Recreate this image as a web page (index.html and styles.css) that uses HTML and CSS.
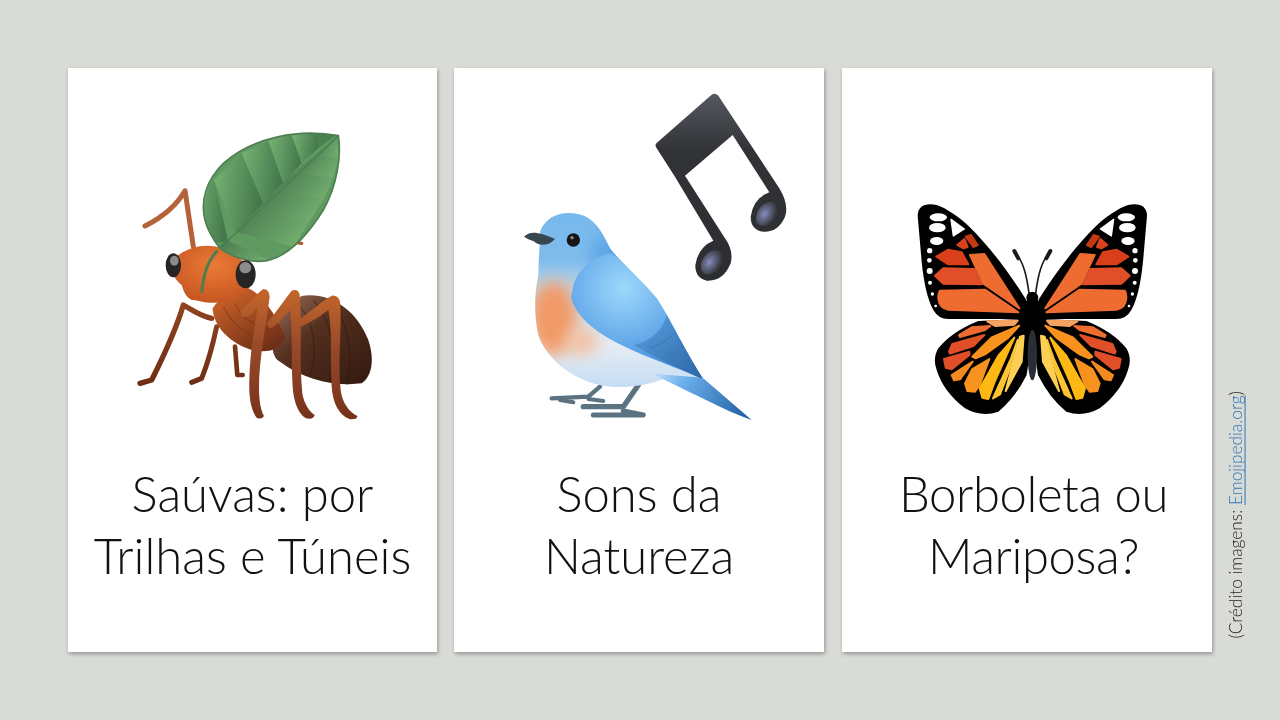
FILE: index.html
```html
<!DOCTYPE html>
<html lang="pt-BR">
<head>
<meta charset="utf-8">
<title>Cartões</title>
<link rel="stylesheet" href="styles.css">
</head>
<body>
<main class="stage">
  <section class="card card-first">
    <div class="figure">
      <svg class="art art-ant" viewBox="0 0 810 930" aria-hidden="true">
        <defs>
          <linearGradient id="antLeg" gradientUnits="userSpaceOnUse" x1="0" y1="510" x2="0" y2="900"><stop offset="0" stop-color="#c4662a"/><stop offset=".45" stop-color="#97492a"/><stop offset="1" stop-color="#76321a"/></linearGradient>
          <linearGradient id="antFar" gradientUnits="userSpaceOnUse" x1="0" y1="550" x2="0" y2="790"><stop offset="0" stop-color="#8f4320"/><stop offset="1" stop-color="#6e2e14"/></linearGradient>
          <radialGradient id="antHead" cx=".55" cy=".35" r=".75"><stop offset="0" stop-color="#ec7a36"/><stop offset="1" stop-color="#c0501f"/></radialGradient>
          <linearGradient id="antThorax" x1="0" y1="0" x2=".7" y2="1"><stop offset="0" stop-color="#d9692a"/><stop offset="1" stop-color="#6f2f18"/></linearGradient>
          <linearGradient id="antBelly" x1="0" y1="0" x2="1" y2="1"><stop offset="0" stop-color="#a07260"/><stop offset=".4" stop-color="#54301f"/><stop offset="1" stop-color="#321810"/></linearGradient>
          <linearGradient id="leafA" x1="0" y1="0" x2="1" y2=".2"><stop offset="0" stop-color="#79b474"/><stop offset="1" stop-color="#44784c"/></linearGradient>
          <linearGradient id="leafB" x1="0" y1=".1" x2="1" y2=".6"><stop offset="0" stop-color="#48794f"/><stop offset="1" stop-color="#72ad6e"/></linearGradient>
          <clipPath id="leafClip"><path d="M655 47C540 25 400 50 310 130C260 180 240 240 255 300C265 340 285 365 300 385C340 415 400 430 440 422C500 410 560 350 610 270C650 200 665 110 655 47Z"/></clipPath>
        </defs>
        <g fill="none" stroke-linecap="round" stroke-linejoin="round">
          <path d="M345 680L352 765L368 765" stroke="url(#antFar)" stroke-width="14"/>
          <path d="M290 620C275 690 255 750 245 775L215 787" stroke="url(#antFar)" stroke-width="15"/>
          <path d="M275 595C245 590 215 570 190 555C165 640 120 730 95 780L60 790" stroke="url(#antFar)" stroke-width="16"/>
        </g>
        <path d="M545 528C630 515 710 570 745 660C765 720 755 770 725 790C650 800 550 780 480 725C430 700 470 570 545 528Z" fill="url(#antBelly)"/>
        <g fill="none" stroke="#2d150d" stroke-opacity=".4" stroke-width="4"><path d="M580 540C640 610 650 700 630 785"/><path d="M630 540C690 610 700 710 680 795"/><path d="M540 560C590 620 590 700 570 770"/></g>
        <path d="M385 505C430 525 470 590 495 650C490 690 440 700 395 690C330 670 280 620 278 565C300 530 345 510 385 505Z" fill="url(#antThorax)"/>
        <g fill="none" stroke="#7e3514" stroke-opacity=".5" stroke-width="4"><path d="M310 560C330 600 360 640 420 650"/><path d="M345 550C360 590 400 620 460 630"/></g>
        <path d="M150 430C185 385 250 365 310 385C370 410 400 450 390 500C370 525 320 550 270 548C245 548 235 540 215 540C195 530 190 510 185 495C165 480 150 455 150 430Z" fill="url(#antHead)"/>
        <path d="M290 395C265 420 250 465 245 515" fill="none" stroke="#4f7e4d" stroke-width="9" stroke-linecap="round"/>
        <path d="M220 380L195 212C165 265 120 295 75 318" fill="none" stroke="#b5623a" stroke-width="15" stroke-linecap="round" stroke-linejoin="round"/>
        <path d="M530 368L545 370" stroke="#b4552a" stroke-width="10" stroke-linecap="round"/>
        <g clip-path="url(#leafClip)">
          <rect x="240" y="20" width="430" height="420" fill="#5f9a60"/>
          <path d="M325 365L282 180L220 260L260 370Z" fill="url(#leafA)"/>
          <path d="M345 340L430 250L365 100L282 180Z" fill="url(#leafA)"/>
          <path d="M430 250L490 190L445 62L365 100Z" fill="url(#leafA)"/>
          <path d="M490 190L545 130L515 45L445 62Z" fill="url(#leafA)"/>
          <path d="M545 130L595 85L595 40L515 45Z" fill="url(#leafA)"/>
          <path d="M595 85L655 40L595 35Z" fill="#4b8050"/>
          <path d="M320 360L470 430L300 430L290 385Z" fill="url(#leafB)"/>
          <path d="M345 335L415 265L565 310L520 380Z" fill="url(#leafB)"/>
          <path d="M415 265L475 200L610 240L565 310Z" fill="url(#leafB)"/>
          <path d="M475 200L525 155L640 175L610 240Z" fill="url(#leafB)"/>
          <path d="M525 155L585 105L655 115L640 175Z" fill="url(#leafB)"/>
          <path d="M585 105L650 50L660 115Z" fill="url(#leafB)"/>
          <path d="M300 385L655 47" stroke="#4a7d50" stroke-width="4" fill="none"/>
        </g>
        <path d="M655 47C540 25 400 50 310 130C260 180 240 240 255 300C265 340 285 365 300 385C340 415 400 430 440 422C500 410 560 350 610 270C650 200 665 110 655 47Z" fill="none" stroke="#4d7f52" stroke-width="5"/>
        <ellipse cx="160" cy="436" rx="23" ry="36" fill="#262424"/>
        <ellipse cx="163" cy="422" rx="13" ry="15" fill="#8c8a8a"/>
        <ellipse cx="377" cy="463" rx="30" ry="42" fill="#262424"/>
        <ellipse cx="376" cy="443" rx="18" ry="17" fill="#8c8a8a"/>
        <path d="M360 570C385 555 410 520 430 507Q448 508 449 530C437 620 417 720 417 800C417 840 422 870 432 888Q425 900 410 893C393 870 386 830 388 780C390 700 403 620 413 560C400 580 385 595 365 590Z" fill="url(#antLeg)"/>
        <path d="M440 610C470 575 500 530 515 512Q535 505 539 525C547 620 537 720 547 820C552 850 567 875 584 885Q580 900 558 895C533 880 520 840 518 800C513 720 518 640 510 570C490 590 470 620 450 625Z" fill="url(#antLeg)"/>
        <path d="M530 605C570 575 610 540 635 527Q655 525 660 545C667 620 652 720 662 810C667 850 687 875 712 888Q712 900 688 897C658 885 638 850 635 800C630 720 638 640 625 570C600 590 560 615 535 622Z" fill="url(#antLeg)"/>
      </svg>
    </div>
    <h2 class="title">Saúvas: por<br>Trilhas e Túneis</h2>
  </section>

  <section class="card">
    <div class="figure">
      <svg class="art art-bird" viewBox="0 0 870 1035" aria-hidden="true">
        <defs>
          <linearGradient id="noteFill" x1="0" y1="0" x2="0" y2="1"><stop offset="0" stop-color="#55585f"/><stop offset=".3" stop-color="#313337"/><stop offset="1" stop-color="#2c2d30"/></linearGradient>
          <radialGradient id="noteShine" cx=".4" cy=".55" r=".55"><stop offset="0" stop-color="#858bbd"/><stop offset="1" stop-color="#38393e"/></radialGradient>
          <linearGradient id="birdBody" gradientUnits="userSpaceOnUse" x1="0" y1="380" x2="0" y2="910"><stop offset="0" stop-color="#76b9ee"/><stop offset=".28" stop-color="#80bcec"/><stop offset=".42" stop-color="#bcd6ea"/><stop offset=".75" stop-color="#e6edf5"/><stop offset="1" stop-color="#c4dcf2"/></linearGradient>
          <radialGradient id="birdWing" gradientUnits="userSpaceOnUse" cx="340" cy="610" r="230"><stop offset="0" stop-color="#9ed8fc"/><stop offset="1" stop-color="#4d96e2"/></radialGradient>
          <linearGradient id="birdTail" gradientUnits="userSpaceOnUse" x1="420" y1="860" x2="725" y2="1005"><stop offset="0" stop-color="#cfe3f5"/><stop offset=".3" stop-color="#6db0ee"/><stop offset="1" stop-color="#1d5a9c"/></linearGradient>
          <linearGradient id="birdFeather" x1="0" y1="0" x2="1" y2="1"><stop offset="0" stop-color="#5a9fe0"/><stop offset="1" stop-color="#245e9c"/></linearGradient>
          <filter id="soft" x="-60%" y="-60%" width="220%" height="220%"><feGaussianBlur stdDeviation="24"/></filter>
          <clipPath id="birdClip"><path d="M90 440C110 385 170 375 215 390C260 405 280 450 300 490C330 530 400 590 440 640C480 700 510 770 578 880L470 878C420 900 350 910 300 905C170 890 100 800 85 750C70 680 75 620 85 570C85 520 90 490 90 440Z"/></clipPath>
        </defs>
        <path d="M604 30Q615 22 625 32L808 310Q838 360 825 395Q805 442 760 440Q722 435 722 395Q730 340 778 322L668 150L525 272L642 455Q672 495 662 535Q640 590 590 587Q555 578 556 540Q565 485 610 467L493 272L440 190Q433 180 440 174Z" fill="url(#noteFill)"/>
        <ellipse cx="605" cy="532" rx="28" ry="40" transform="rotate(35 605 532)" fill="url(#noteShine)"/>
        <ellipse cx="770" cy="387" rx="28" ry="40" transform="rotate(35 770 387)" fill="url(#noteShine)"/>
        <g fill="none" stroke="#5a7282" stroke-linecap="round" stroke-linejoin="round">
          <path d="M270 905L235 935L125 940" stroke-width="13"/>
          <path d="M235 942L280 948M150 945L190 952" stroke-width="12"/>
          <path d="M385 900L340 965L220 965" stroke-width="16"/>
          <path d="M340 978L400 990L250 990" stroke-width="15"/>
        </g>
        <g clip-path="url(#birdClip)">
          <rect x="60" y="370" width="540" height="550" fill="url(#birdBody)"/>
          <ellipse cx="130" cy="700" rx="72" ry="112" fill="#f29a66" filter="url(#soft)"/>
          <ellipse cx="215" cy="770" rx="50" ry="40" fill="#f2c0a0" filter="url(#soft)"/>
        </g>
        <path d="M430 866L578 878L725 1005C640 975 550 925 470 888Z" fill="url(#birdTail)"/>
        <g clip-path="url(#birdClip)">
          <ellipse cx="320" cy="500" rx="80" ry="60" fill="#5fa6e8" filter="url(#soft)"/>
          <path d="M183 640L190 600C205 555 240 520 300 505L620 700L620 900L578 880C450 830 340 790 280 750C230 720 195 680 183 640Z" fill="url(#birdWing)"/>
          <path d="M372 780C420 770 460 735 470 690L620 800L620 900C500 850 430 815 372 780Z" fill="url(#birdFeather)"/>
          <g fill="none" stroke="#2f6aae" stroke-opacity=".5" stroke-width="3"><path d="M420 790C470 770 490 750 500 735"/><path d="M470 815C510 795 525 780 530 770"/><path d="M515 840C540 825 548 815 552 805"/></g>
        </g>
        <path d="M42 455C60 437 85 440 135 462C115 485 85 483 70 468C60 464 50 461 42 455Z" fill="#37474f"/>
        <circle cx="190" cy="465" r="20" fill="#16161a"/>
        <circle cx="186" cy="458" r="5" fill="#8f8f96"/>
      </svg>
    </div>
    <h2 class="title">Sons da<br>Natureza</h2>
  </section>

  <section class="card card-last">
    <div class="figure">
      <svg class="art art-fly" viewBox="0 0 765 675" aria-hidden="true">
        <defs>
          <g id="flyWing">
            <path d="M362 312C310 230 250 150 190 92C160 65 125 40 95 30Q40 20 38 62L50 200Q60 300 85 345Q100 372 130 372L345 372L220 378Q140 410 100 460Q82 490 95 525Q115 590 180 640Q230 668 280 650Q330 610 365 540L385 400Z" fill="#000"/>
            <g stroke-width="6" stroke-linejoin="round">
              <path d="M105 287L240 284L340 352L130 344Q102 338 100 310Q100 294 105 287Z" fill="#ee6c30" stroke="#ee6c30"/>
              <path d="M90 242L115 220L208 222L230 268L115 266Z" fill="#e04f28" stroke="#e04f28"/>
              <path d="M94 185L130 164L170 172L190 208L130 208Z" fill="#da3f1a" stroke="#da3f1a"/>
              <path d="M195 180L238 177L343 340L235 266Z" fill="#ee6c30" stroke="#ee6c30"/>
              <path d="M157 150L178 132L188 156L175 160Z" fill="#d9431c" stroke="#d9431c"/>
              <path d="M182 125L198 120L218 150L205 156Z" fill="#c33a13" stroke="#c33a13"/>
              <path d="M247 379L338 377L328 389L270 393Z" fill="#f4a460" stroke="#f4a460"/>
              <path d="M162 420L200 397L256 393L240 405L165 426Z" fill="#ee6c30" stroke="#ee6c30"/>
              <path d="M132 470L142 447L238 420L205 453L135 476Z" fill="#e04f28" stroke="#e04f28"/>
              <path d="M117 492L193 470L193 480L140 523L122 518Z" fill="#e04f28" stroke="#e04f28"/>
              <path d="M140 540L203 500L165 553L147 556Z" fill="#f28a20" stroke="#f28a20"/>
              <path d="M180 565L202 522L253 492L225 568L210 590L187 588Z" fill="#f8921e" stroke="#f8921e"/>
              <path d="M202 485L260 427L343 392L310 428L240 478L212 490Z" fill="#f8921e" stroke="#f8921e"/>
              <path d="M224 580L242 550L280 482L328 428L270 558L250 612L232 608Z" fill="#fdb813" stroke="#fdb813"/>
              <path d="M264 610L318 490L338 435L315 520L285 598Z" fill="#fdc431" stroke="#fdc431"/>
              <path d="M302 588L345 425L356 422L350 500Z" fill="#fdd055" stroke="#fdd055"/>
            </g>
            <g fill="#fff">
              <ellipse cx="100" cy="67" rx="26" ry="12"/>
              <ellipse cx="97" cy="98" rx="25" ry="14"/>
              <ellipse cx="95" cy="138" rx="20" ry="12"/>
              <path d="M138 73L178 102L145 123Z" stroke="#fff" stroke-width="4" stroke-linejoin="round"/>
              <circle cx="74" cy="167" r="8"/><circle cx="73" cy="196" r="7"/><circle cx="74" cy="228" r="9"/><circle cx="75" cy="263" r="6"/><circle cx="82" cy="297" r="5"/><circle cx="92" cy="333" r="4"/>
            </g>
            <path d="M372 295C365 240 355 200 335 180" fill="none" stroke="#1a1a1a" stroke-width="5"/>
            <path d="M340 190L328 168" stroke="#1a1a1a" stroke-width="12" stroke-linecap="round"/>
          </g>
        </defs>
        <use href="#flyWing"/>
        <use href="#flyWing" transform="translate(764 0) scale(-1 1)"/>
        <circle cx="382" cy="308" r="18" fill="#000"/>
        <ellipse cx="382" cy="365" rx="36" ry="55" fill="#000"/>
        <ellipse cx="382" cy="480" rx="14" ry="76" fill="#2a2f36"/>
      </svg>
    </div>
    <h2 class="title title-shift">Borboleta ou<br>Mariposa?</h2>
  </section>

  <p class="credit">(Crédito imagens: <a class="credit-link" href="#">Emojipedia.org</a>)</p>
</main>
</body>
</html>
```
FILE: styles.css
```css
* { box-sizing: border-box; }
html, body { margin: 0; height: 100%; }
body {
  background: #d9dbd7;
  font-family: "Lato", "Liberation Sans", sans-serif;
  overflow: hidden;
}
.stage {
  display: flex;
  gap: 17px;
  height: 720px;
  padding: 68px 0 68px 68px;
}
.card {
  width: 370px;
  height: 584px;
  background: #fff;
  box-shadow: 1px 2px 4px rgba(0, 0, 0, .32);
}
.card-first { width: 369px; }
.card-last { margin-left: 1px; }
.figure { height: 394px; }
.art { display: block; filter: blur(.45px); }
.art-ant { width: 270px; height: 310px; margin: 0 0 0 52px; position: relative; top: 52px; }
.art-bird { width: 290px; height: 345px; margin: 0 0 0 56px; position: relative; top: 17px; }
.art-fly { width: 255px; height: 225px; margin: 0 0 0 63px; position: relative; top: 127px; }
.title {
  margin: 0;
  text-align: center;
  font-size: 49px;
  font-weight: 300;
  line-height: 62px;
  color: #111;
}
.title-shift { padding-left: 13px; letter-spacing: -.4px; }
.credit {
  align-self: flex-end;
  margin: 0 0 14px -4px;
  writing-mode: vertical-rl;
  transform: rotate(180deg);
  font-size: 17.3px;
  font-weight: 300;
  color: #222;
  white-space: nowrap;
}
.credit-link { color: #2e75b6; }
```
